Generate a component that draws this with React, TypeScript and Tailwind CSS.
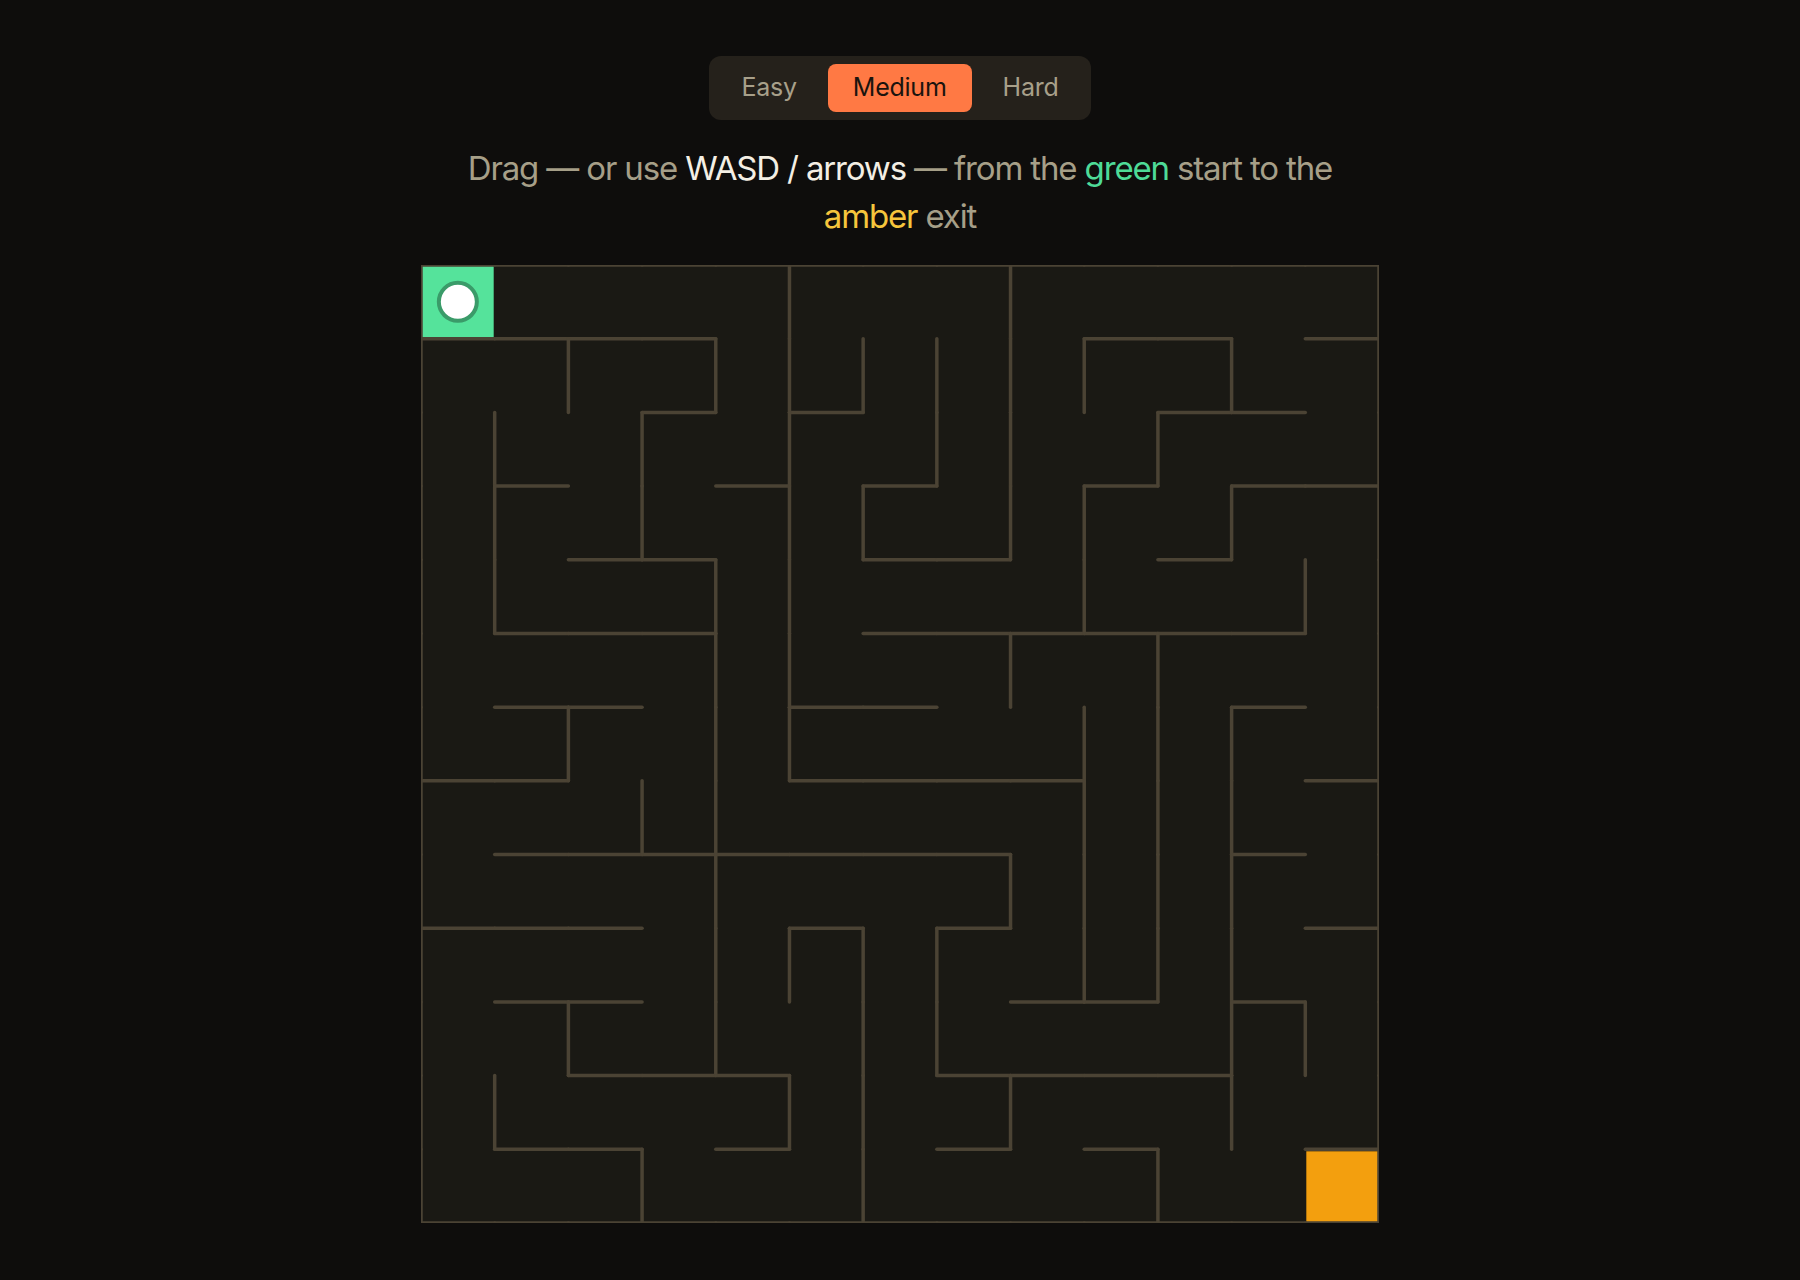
import React from 'react';

const N = 13;
const SIZE = 958;
const CELL = SIZE / N;

// horizontal walls: row j (0..13), one char per column
const H = [
  '1111111111111',
  '1111000001101',
  '0001010000110',
  '0100101001011',
  '0011001100100',
  '0111001111110',
  '0110011000010',
  '1100011110001',
  '0111111100010',
  '1110010100001',
  '0110000011010',
  '0011100111100',
  '0110100101001',
  '1111111111111',
];

// vertical walls: row j (0..12), one char per grid line x (0..13)
const V = [
  '10000100100001',
  '10101111110101',
  '11010101101001',
  '11010110110101',
  '11001100010011',
  '10001100101001',
  '10101100011101',
  '10011000011101',
  '10001000111101',
  '10001111011101',
  '10101011000111',
  '11000110100101',
  '10010010001001',
];

const LEVELS = ['Easy', 'Medium', 'Hard'];

function Maze() {
  const walls: React.ReactNode[] = [];
  H.forEach((row, j) => {
    row.split('').forEach((c, i) => {
      if (c === '1') {
        walls.push(
          <line key={`h${j}-${i}`} x1={i * CELL} y1={j * CELL} x2={(i + 1) * CELL} y2={j * CELL} />
        );
      }
    });
  });
  V.forEach((row, j) => {
    row.split('').forEach((c, i) => {
      if (c === '1') {
        walls.push(
          <line key={`v${j}-${i}`} x1={i * CELL} y1={j * CELL} x2={i * CELL} y2={(j + 1) * CELL} />
        );
      }
    });
  });

  const end = (N - 1) * CELL;

  return (
    <div className="w-[958px] h-[958px] bg-[#1a1914] mt-[25px]">
      <svg width={SIZE} height={SIZE} viewBox={`0 0 ${SIZE} ${SIZE}`} className="block">
        <rect x={1} y={1} width={CELL - 2} height={CELL - 2} fill="#55e39b" />
        <rect x={end + 1} y={end + 2} width={CELL - 2} height={CELL - 3} fill="#f39f0e" />
        <g stroke="#4b4334" strokeWidth={3.5} strokeLinecap="round">
          {walls}
        </g>
        <circle cx={CELL / 2} cy={CELL / 2} r={19} fill="#ffffff" stroke="#3a9b69" strokeWidth={4} />
      </svg>
    </div>
  );
}

export default function App() {
  const level = 'Medium';
  return (
    <div className="min-h-screen bg-[#0e0d0c] flex flex-col items-center pt-[56px] font-['Inter',sans-serif]">
      <div className="flex gap-1.5 p-2 bg-[#25211b] rounded-xl">
        {LEVELS.map((l) => (
          <button
            key={l}
            className={
              l === level
                ? 'h-12 px-[25px] rounded-lg bg-[#ff7944] text-[#1a140e] text-[25px] tracking-[-0.01em]'
                : 'h-12 px-[25px] rounded-lg text-[#a8a08a] text-[25px] tracking-[-0.01em]'
            }
          >
            {l}
          </button>
        ))}
      </div>

      <p className="mt-6 max-w-[900px] text-center text-[33px] leading-[48px] tracking-[-0.035em] text-[#a69f88]">
        Drag — or use <span className="text-[#f4efe4]">WASD / arrows</span> — from the{' '}
        <span className="text-[#4edb98]">green</span> start to the{' '}
        <span className="text-[#f6c53c]">amber</span> exit
      </p>

      <Maze />
    </div>
  );
}
